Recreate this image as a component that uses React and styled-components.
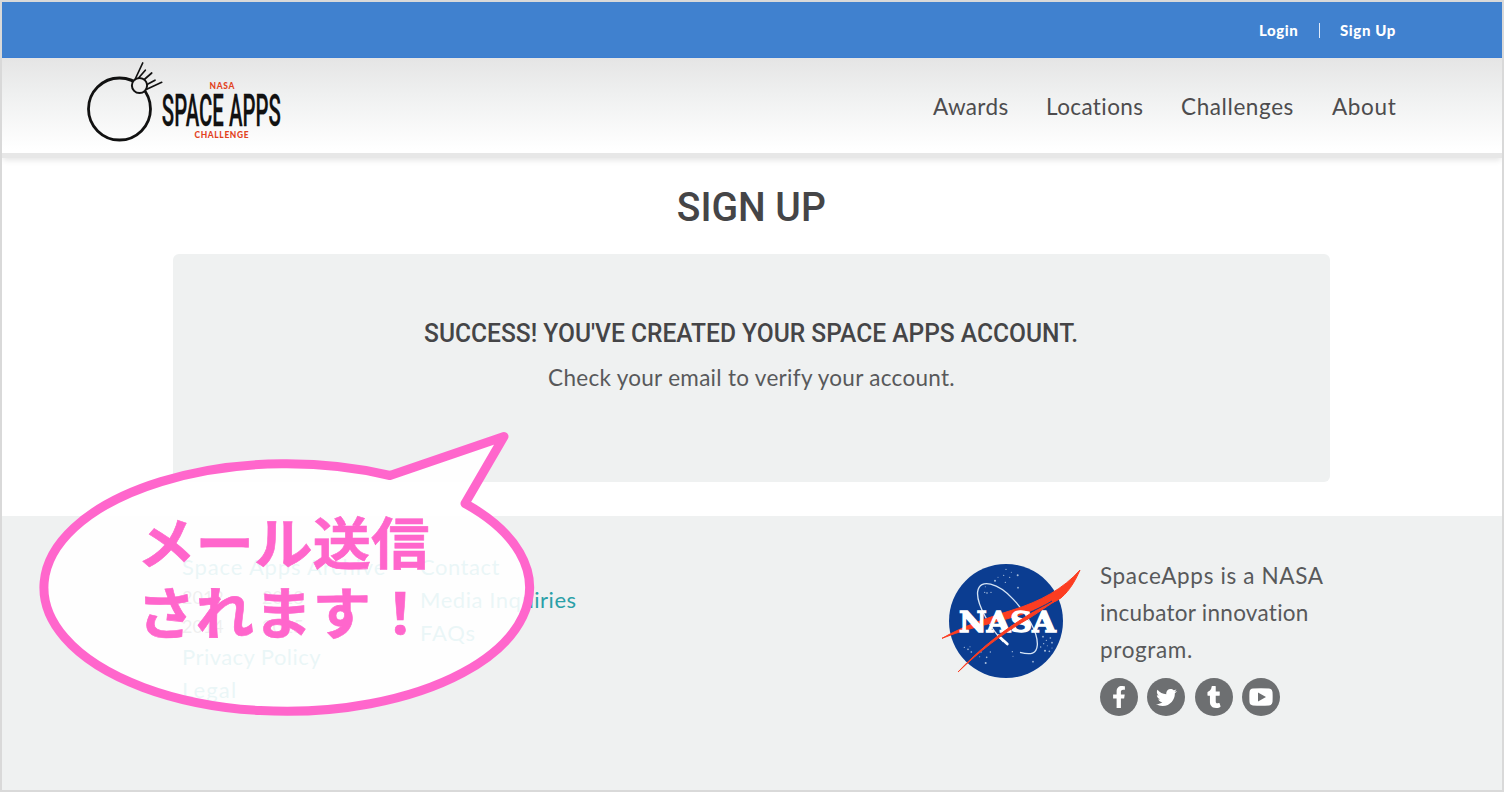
import React from "react";
import styled, { createGlobalStyle } from "styled-components";
import { FaFacebookF, FaTwitter, FaTumblr } from "react-icons/fa";

const GlobalStyle = createGlobalStyle`
  *, *::before, *::after { box-sizing: border-box; }
  body { margin: 0; background: #fff; }
`;

const Page = styled.div`
  position: relative;
  display: flex;
  flex-direction: column;
  width: 1504px;
  height: 792px;
  overflow: hidden;
  border: 2px solid #d9d9d9;
  background: #fff;
  color: #58595b;
  font-family: Lato, "Noto Sans CJK JP", sans-serif;
`;

const TopBar = styled.div`
  display: flex;
  flex: none;
  align-items: center;
  justify-content: flex-end;
  height: 56px;
  padding-right: 106px;
  background: #4081cf;
  border-bottom: 1px solid #3c7ed2;
  color: #fff;
  font-size: 15px;
  font-weight: 900;
`;

const TopLink = styled.a`
  display: block;
  width: ${(p) => p.$w}px;
  letter-spacing: ${(p) => p.$spacing}px;
  white-space: nowrap;
`;

const Divider = styled.span`
  width: 1px;
  height: 15px;
  margin: 2px 20px 0;
  background: #dfeafa;
`;

const Header = styled.header`
  display: flex;
  flex: none;
  align-items: center;
  justify-content: space-between;
  height: 95px;
  padding: 0 106px 0 80px;
  background: linear-gradient(#e5e5e5, #eff0f0 38%, #fff 96%);
  box-shadow: 0 5px 0 #e7e7e7, 0 8px 6px -1px #e3e3e3;
`;

const Nav = styled.nav`
  display: flex;
  gap: 38px;
  padding-top: 3px;
`;

const NavLink = styled.a`
  width: ${(p) => p.$w}px;
  color: #4d4c4e;
  font-size: 22.5px;
  line-height: 30px;
  letter-spacing: ${(p) => p.$spacing}px;
  white-space: nowrap;
`;

const Main = styled.main`
  display: flex;
  flex: none;
  flex-direction: column;
  align-items: center;
  height: 363px;
  padding: 29px 1px 0 0;
`;

const Title = styled.h1`
  height: 50px;
  margin: 0 0 22px;
  color: #454547;
  font: 500 41.5px/50px Roboto, sans-serif;
  white-space: nowrap;
  transform: scaleX(0.94);
`;

const Panel = styled.section`
  display: flex;
  flex-direction: column;
  align-items: center;
  width: 1157px;
  height: 228px;
  padding-top: 61px;
  border-radius: 6px;
  background: #eff1f1;
`;

const PanelHeading = styled.h2`
  height: 36px;
  margin: 0 0 11px;
  color: #454547;
  font: 500 26px/36px Roboto, sans-serif;
  white-space: nowrap;
  transform: scaleX(0.945);
`;

const PanelText = styled.p`
  margin: 0;
  color: #58595b;
  font-size: 22.5px;
  line-height: 32px;
  letter-spacing: 0.29px;
  white-space: nowrap;
`;

const Footer = styled.footer`
  display: flex;
  flex: 1;
  align-items: flex-start;
  padding: 34px 0 0 180px;
  background: #eff1f1;
`;

const LinkColumn = styled.div`
  display: flex;
  flex-direction: column;
  width: ${(p) => p.$w}px;
`;

const FooterLink = styled.a`
  color: #2aa0a8;
  font-size: 22px;
  line-height: 33px;
  letter-spacing: ${(p) => p.$spacing || 0}px;
  white-space: nowrap;
`;

const Years = styled.div`
  display: grid;
  grid-template-columns: 80px 80px;
  margin-bottom: -1px;
  font-size: 18px;
  line-height: 29px;
`;

const About = styled.div`
  display: flex;
  flex-direction: column;
  width: 260px;
`;

const AboutText = styled.p`
  display: flex;
  flex-direction: column;
  margin: 7px 0 10px;
  color: #58595b;
  font-size: 22.5px;
  line-height: 37px;
  white-space: nowrap;
`;

const AboutLine = styled.span`
  letter-spacing: ${(p) => p.$spacing}px;
`;

const Social = styled.div`
  display: flex;
  gap: 9.4px;
`;

const SocialButton = styled.a`
  display: flex;
  align-items: center;
  justify-content: center;
  width: 38px;
  height: 38px;
  border-radius: 50%;
  background: #6d6f71;
  color: #fff;
`;

const Emblem = styled.svg`
  flex: none;
  width: 170px;
  height: 150px;
  margin: -5px 0 0;
`;

const Bubble = styled.div`
  position: absolute;
  left: 26px;
  top: 418px;
  width: 520px;
  height: 310px;
`;

const BubbleShape = styled.svg`
  position: absolute;
  inset: 0;
  width: 100%;
  height: 100%;
`;

const BubbleText = styled.p`
  position: relative;
  margin: 0;
  padding: 85px 0 0 109px;
  color: #ff66cc;
  font: 700 56px/70px "Noto Sans CJK JP", sans-serif;
  -webkit-text-stroke: 0.6px #ff66cc;
  white-space: nowrap;
  transform: scaleX(1.045);
  transform-origin: 109px 0;
`;

function SpaceAppsLogo() {
  return (
    <svg width="206" height="95" viewBox="82 58 206 95" overflow="visible">
      <g fill="none" stroke="#111" strokeLinecap="round">
        <circle cx="119.5" cy="109" r="31" strokeWidth="2.8" />
        <circle cx="139.5" cy="85.5" r="7.6" strokeWidth="2" fill="#ececec" />
        <path
          strokeWidth="1.7"
          d="M135 79.5 142.7 63M139 77.5 145.3 70.2M144.3 79.5 151.7 73M147.5 84.3 155 80.2M146.7 89.3 161.7 82.3"
        />
      </g>
      <g fontFamily="Lato, sans-serif" fontWeight="900" fill="#e2431e">
        <text x="209.5" y="88.8" fontSize="8.4" textLength="25" lengthAdjust="spacing">NASA</text>
        <text x="194.5" y="138" fontSize="8.4" textLength="54" lengthAdjust="spacing">CHALLENGE</text>
      </g>
      <text
        x="161.8"
        y="126.3"
        fontFamily="Roboto, sans-serif"
        fontWeight="500"
        fontSize="43.5"
        fill="#111"
        stroke="#111"
        strokeWidth="0.3"
        textLength="119"
        lengthAdjust="spacingAndGlyphs"
      >
        SPACE APPS
      </text>
    </svg>
  );
}

const STARS = [
  [228, 73, 2], [195, 107, 3], [221, 91, 2], [239, 97, 2], [263, 91, 3], [226, 112, 2], [264, 128, 2.5],
  [204, 97, 1.5], [244, 82, 1.5], [164, 142, 2], [171, 144, 2.5], [183, 142, 2], [166, 125, 1.5],
  [103, 307, 2], [114, 313, 2.5], [124, 321, 2.5], [120, 305, 1.5], [153, 321, 2], [149, 335, 1.5],
  [170, 337, 2.5], [167, 354, 3], [181, 321, 2], [247, 320, 2], [249, 334, 1.5], [309, 350, 2.5],
  [339, 275, 2.5], [349, 286, 2], [361, 279, 2.5], [366, 293, 2.5], [341, 296, 2], [352, 302, 1.5],
  [345, 317, 3], [358, 319, 2.5], [332, 306, 2], [366, 309, 1.5], [128, 338, 1.5],
];

function NasaEmblem() {
  return (
    <Emblem viewBox="0 0 510 450">
      <circle cx="228" cy="228" r="171" fill="#0b3d91" />
      <g fill="#a9bfdc">
        {STARS.map(([x, y, r], i) => (
          <circle key={i} cx={x} cy={y} r={r} />
        ))}
      </g>
      <path
        d="M220 290C185 255 138 178 143 140C149 98 205 114 250 163C292 208 324 262 322 300C320 326 303 331 270 322"
        fill="none"
        stroke="#d5e4f5"
        strokeWidth="4"
      />
      <path d="M205 272 232 297" stroke="#fff" strokeWidth="8" strokeLinecap="round" />
      <path
        d="M36 280C100 244 165 221 245 196C330 170 402 130 450 75C434 112 412 148 382 166C325 192 270 212 200 230C140 246 90 258 36 280Z"
        fill="#fc3d21"
        stroke="#fc3d21"
        strokeWidth="3"
        strokeLinejoin="round"
      />
      <text
        x="87"
        y="260"
        fill="#fff"
        stroke="#fff"
        strokeWidth="4"
        fontFamily="'DejaVu Serif', serif"
        fontWeight="700"
        fontSize="83"
        textLength="290"
        lengthAdjust="spacingAndGlyphs"
      >
        NASA
      </text>
      <path
        d="M84 381C155 305 230 250 298 208C340 184 365 165 386 143L394 157C350 183 330 200 300 218C210 270 150 318 84 381Z"
        fill="#fc3d21"
        stroke="#fc3d21"
        strokeWidth="3"
        strokeLinejoin="round"
      />
      <path d="M300 202C330 188 350 178 366 168" fill="none" stroke="#0b3d91" strokeWidth="3" />
    </Emblem>
  );
}

function YouTubeIcon() {
  return (
    <svg width="24" height="18" viewBox="0 0 24 18">
      <path
        fill="#fff"
        fillRule="evenodd"
        d="M4 .6Q12-.1 20 .6Q23.2.8 23.5 4Q23.8 9 23.5 14Q23.2 17.2 20 17.4Q12 18.1 4 17.4Q.8 17.2.5 14Q.2 9 .5 4Q.8.8 4 .6ZM9 4.5V13.5L17 9Z"
      />
    </svg>
  );
}

export default function App() {
  return (
    <>
      <GlobalStyle />
      <Page>
        <TopBar>
          <TopLink $w={40} $spacing={0.6}>Login</TopLink>
          <Divider />
          <TopLink $w={56} $spacing={0.6}>Sign Up</TopLink>
        </TopBar>
        <Header>
          <SpaceAppsLogo />
          <Nav>
            <NavLink $w={75} $spacing={0.35}>Awards</NavLink>
            <NavLink $w={97} $spacing={0.4}>Locations</NavLink>
            <NavLink $w={113} $spacing={0.6}>Challenges</NavLink>
            <NavLink $w={64} $spacing={0.65}>About</NavLink>
          </Nav>
        </Header>
        <Main>
          <Title>SIGN UP</Title>
          <Panel>
            <PanelHeading>SUCCESS! YOU'VE CREATED YOUR SPACE APPS ACCOUNT.</PanelHeading>
            <PanelText>Check your email to verify your account.</PanelText>
          </Panel>
        </Main>
        <Footer>
          <LinkColumn $w={238}>
            <FooterLink $spacing={0.85}>Space Apps Archive</FooterLink>
            <Years>
              <span>2012</span>
              <span>2013</span>
              <span>2014</span>
              <span>2015</span>
            </Years>
            <FooterLink $spacing={0.45}>Privacy Policy</FooterLink>
            <FooterLink $spacing={1.1}>Legal</FooterLink>
          </LinkColumn>
          <LinkColumn $w={510}>
            <FooterLink $spacing={0.5}>Contact</FooterLink>
            <FooterLink $spacing={0.55}>Media Inquiries</FooterLink>
            <FooterLink $spacing={0.8}>FAQs</FooterLink>
          </LinkColumn>
          <NasaEmblem />
          <About>
            <AboutText>
              <AboutLine $spacing={0.65}>SpaceApps is a NASA</AboutLine>
              <AboutLine $spacing={0.27}>incubator innovation</AboutLine>
              <AboutLine $spacing={0.65}>program.</AboutLine>
            </AboutText>
            <Social>
              <SocialButton><FaFacebookF size={22} /></SocialButton>
              <SocialButton><FaTwitter size={21} /></SocialButton>
              <SocialButton><FaTumblr size={22} /></SocialButton>
              <SocialButton><YouTubeIcon /></SocialButton>
            </Social>
          </About>
        </Footer>
        <Bubble>
          <BubbleShape viewBox="30 420 520 310">
            <path
              d="M392 475.5 506 436.5 467 503.500A242.800 123.800 0 1 1 392 475.500Z"
              fill="rgba(255,255,255,0.9)"
              stroke="#ff66cc"
              strokeWidth="9"
              strokeLinejoin="round"
            />
          </BubbleShape>
          <BubbleText>
            メール送信
            <br />
            されます！
          </BubbleText>
        </Bubble>
      </Page>
    </>
  );
}
